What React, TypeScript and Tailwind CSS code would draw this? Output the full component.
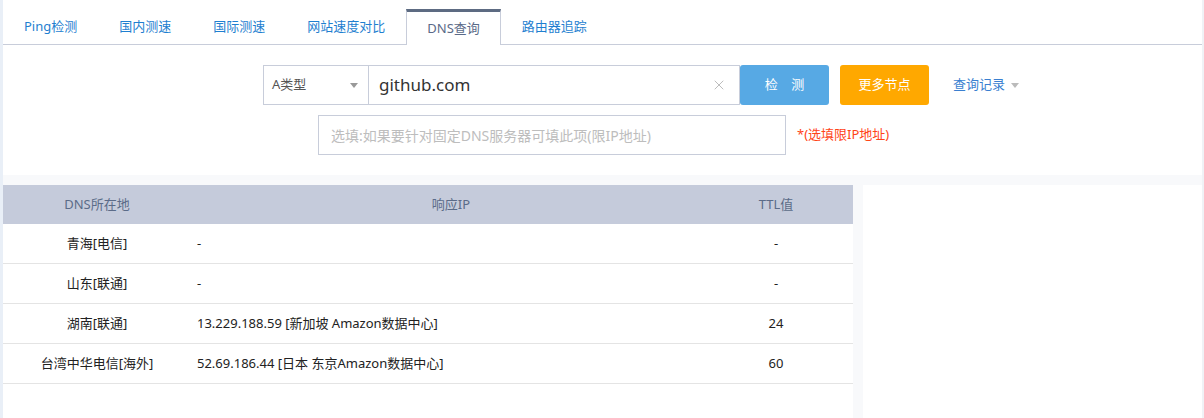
import { X } from "lucide-react";

const tabs = ["Ping检测", "国内测速", "国际测速", "网站速度对比", "DNS查询", "路由器追踪"];
const active = "DNS查询";

const rows = [
  { loc: "青海[电信]", ip: "-", ttl: "-" },
  { loc: "山东[联通]", ip: "-", ttl: "-" },
  { loc: "湖南[联通]", ip: "13.229.188.59 [新加坡 Amazon数据中心]", ttl: "24" },
  { loc: "台湾中华电信[海外]", ip: "52.69.186.44 [日本 东京Amazon数据中心]", ttl: "60" },
];

function Caret({ className }: { className?: string }) {
  return (
    <svg width="8" height="5" viewBox="0 0 8 5" className={className}>
      <path d="M0 0h8L4 5z" fill="currentColor" />
    </svg>
  );
}

export default function App() {
  return (
    <div className="flex min-h-[418px] bg-[#f8f9fb] font-['Noto_Sans','Noto_Sans_CJK_SC',sans-serif]">
      <div className="w-[3px] shrink-0 bg-[#e9eff7]" />
      <div className="flex flex-1 flex-col">
        {/* top panel */}
        <div className="bg-white pb-[20px]">
          <div className="flex border-b border-[#c8cdda] pt-[9px]">
            {tabs.map((t) =>
              t === active ? (
                <div
                  key={t}
                  className="-mb-px flex h-[36px] items-center border-x border-t-[3px] border-x-[#c8cdda] border-t-[#5d6b82] bg-white px-5 text-[13px] text-[#5a6a88]"
                >
                  {t}
                </div>
              ) : (
                <div
                  key={t}
                  className="flex h-[35px] items-center px-[21px] text-[13px] text-[#1f7fd0]"
                >
                  {t}
                </div>
              )
            )}
          </div>

          <div className="mt-5 flex items-center pl-[260px]">
            <div className="flex h-[40px] w-[106px] items-center justify-between border border-[#c8cdda] pl-2 pr-[10px] text-[13px] text-[#555]">
              <span>A类型</span>
              <Caret className="text-[#999]" />
            </div>
            <div className="flex h-[40px] w-[371px] items-center justify-between border-y border-r border-[#c8cdda] pl-[10px] pr-3">
              <span className="text-[17px] text-[#333]">github.com</span>
              <X size={16} strokeWidth={1} className="text-[#9a9a9a]" />
            </div>
            <button className="h-[40px] w-[89px] rounded-[3px] bg-[#57a9e4] text-[13px] text-white">
              检&nbsp;&nbsp;&nbsp;&nbsp;测
            </button>
            <button className="ml-[11px] h-[40px] w-[89px] rounded-[3px] bg-[#ffa800] text-[13px] text-white">
              更多节点
            </button>
            <div className="ml-6 flex items-center gap-[6px] text-[13px] text-[#3a7fd0]">
              查询记录
              <Caret className="text-[#bbb]" />
            </div>
          </div>

          <div className="mt-[10px] flex items-center pl-[315px]">
            <div className="flex h-[40px] w-[468px] items-center border border-[#c8cdda] pl-3 text-[14px] text-[#bdbdbd]">
              选填:如果要针对固定DNS服务器可填此项(限IP地址)
            </div>
            <span className="ml-[11px] text-[13px] text-[#ff4418]">*(选填限IP地址)</span>
          </div>
        </div>

        {/* results */}
        <div className="mt-[10px] flex flex-1">
          <div className="w-[850px] bg-white">
            <div className="grid h-[39px] grid-cols-[188px_520px_1fr] items-center bg-[#c5cbdb] text-[13px] text-[#5b6b88]">
              <div className="text-center">DNS所在地</div>
              <div className="text-center">响应IP</div>
              <div className="pr-3 text-center">TTL值</div>
            </div>
            {rows.map((r) => (
              <div
                key={r.loc}
                className="grid h-[40px] grid-cols-[188px_520px_1fr] items-center border-b border-[#e4e4e4] text-[13px] text-[#222]"
              >
                <div className="text-center">{r.loc}</div>
                <div className="pl-[6px]">{r.ip}</div>
                <div className="pr-3 text-center">{r.ttl}</div>
              </div>
            ))}
          </div>
          <div className="ml-[10px] flex-1 bg-white" />
        </div>
      </div>
      <div className="w-[2px] shrink-0 bg-[#f0f2f6]" />
    </div>
  );
}
